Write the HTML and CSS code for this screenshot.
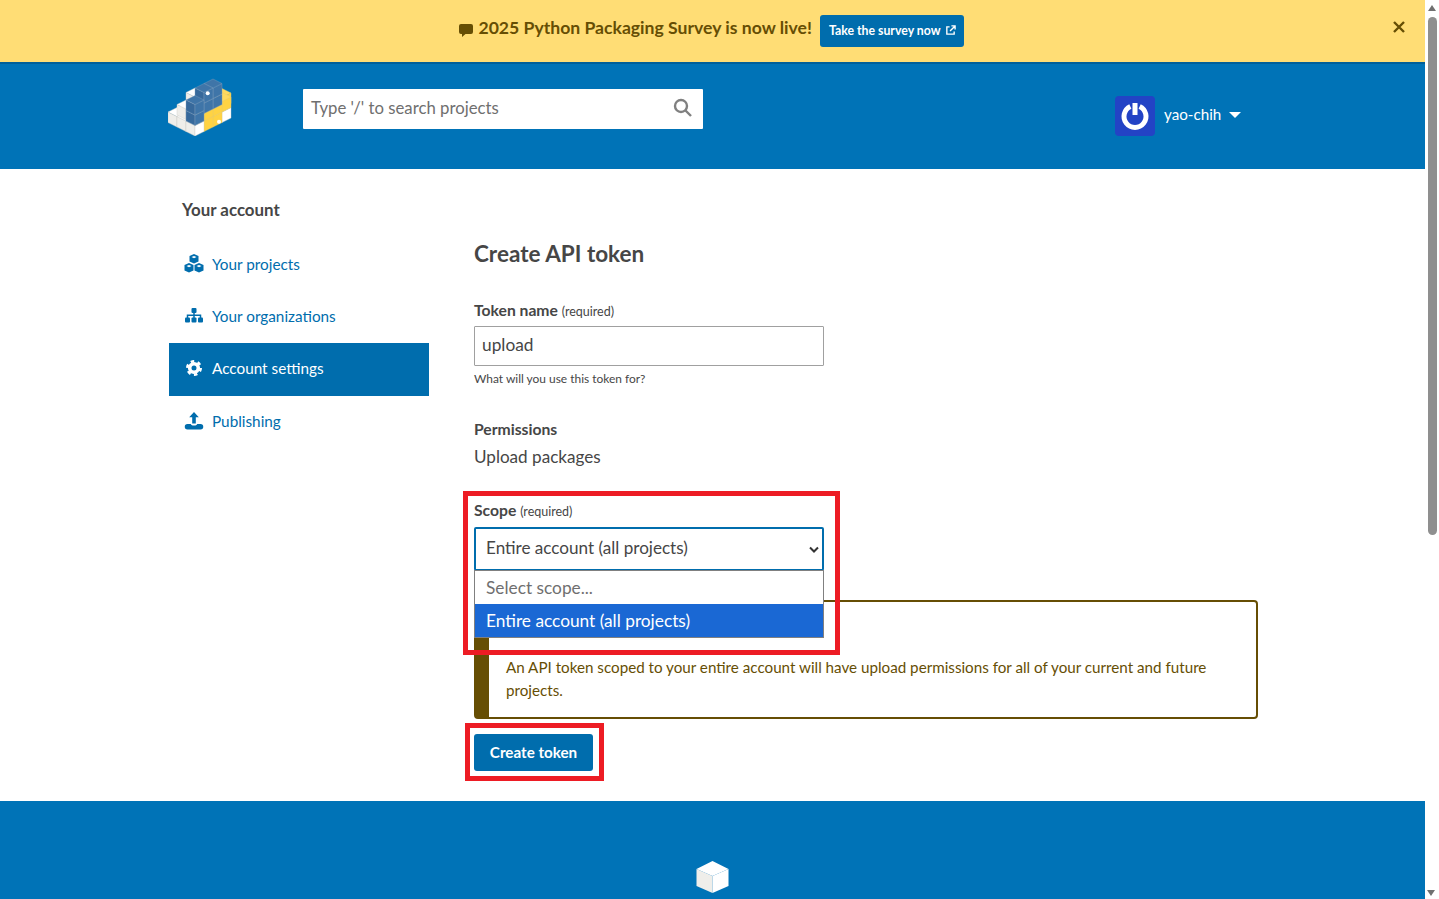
FILE: index.html
```html
<!DOCTYPE html>
<html lang="en">
<head>
<meta charset="utf-8">
<title>Create API token</title>
<link rel="stylesheet" href="styles.css">
</head>
<body>
<svg class="defs" width="0" height="0" aria-hidden="true">
  <symbol id="cube" viewBox="0 0 18 20" overflow="visible">
    <polygon class="face-l" points="0,4.5 9,9 9,19.5 0,15"/>
    <polygon class="face-r" points="9,9 18,4.5 18,15 9,19.5"/>
    <polygon class="face-t" points="9,0 18,4.5 9,9 0,4.5"/>
  </symbol>
</svg>
<div class="viewport">
  <div class="page">
    <div class="banner">
      <div class="banner-msg">
        <svg class="banner-icon" viewBox="0 0 14 14"><path d="M2 1h10a2 2 0 0 1 2 2v6a2 2 0 0 1-2 2H6.500L3 14v-3H2a2 2 0 0 1-2-2V3a2 2 0 0 1 2-2z"/></svg>
        <span class="banner-text">2025 Python Packaging Survey is now live!</span>
        <a class="banner-btn"><span class="btn-label">Take the survey now</span>
          <svg class="ext-icon" viewBox="0 0 12 12"><path d="M5 2H2v8h8V7M7 1h4v4M11 1 5.500 6.500"/></svg>
        </a>
      </div>
      <svg class="banner-close" viewBox="0 0 14 14"><path d="M2 2l10 10M12 2 2 12"/></svg>
    </div>
    <header class="site-header">
      <div class="container header-row">
        <svg class="logo" viewBox="0 -2 64 59">
          <use href="#cube" class="c-w" x="18" y="9" width="18" height="20"/>
          <use href="#cube" class="c-w" x="9" y="24" width="18" height="20"/>
          <use href="#cube" class="c-w" x="0" y="28.500" width="18" height="20"/>
          <use href="#cube" class="c-w" x="9" y="33" width="18" height="20"/>
          <use href="#cube" class="c-w" x="9" y="21" width="18" height="20"/>
          <use href="#cube" class="c-y" x="45" y="9.500" width="18" height="20"/>
          <use href="#cube" class="c-w" x="45" y="24" width="18" height="20"/>
          <use href="#cube" class="c-y" x="45" y="13.500" width="18" height="20"/>
          <use href="#cube" class="c-y" x="36" y="28.500" width="18" height="20"/>
          <use href="#cube" class="c-y" x="36" y="18" width="18" height="20"/>
          <use href="#cube" class="c-y" x="27" y="33" width="18" height="20"/>
          <use href="#cube" class="c-y" x="27" y="22.500" width="18" height="20"/>
          <use href="#cube" class="c-b" x="36" y="10.500" width="18" height="20"/>
          <use href="#cube" class="c-b" x="36" y="0" width="18" height="20"/>
          <use href="#cube" class="c-b" x="27" y="15" width="18" height="20"/>
          <use href="#cube" class="c-b" x="27" y="4.500" width="18" height="20"/>
          <use href="#cube" class="c-w" x="18" y="37.500" width="18" height="20"/>
          <use href="#cube" class="c-b" x="18" y="27" width="18" height="20"/>
          <use href="#cube" class="c-b" x="18" y="16.500" width="18" height="20"/>
          <circle class="eye" cx="39.700" cy="14.300" r="2"/>
          <circle class="eye" cx="51" cy="42.700" r="2"/>
        </svg>
        <div class="search">
          <span class="search-text">Type '/' to search projects</span>
          <svg class="search-icon" viewBox="0 0 20 20"><circle cx="8" cy="8" r="6"/><path d="M12.500 12.500 18 18"/></svg>
        </div>
        <div class="user">
          <svg class="avatar" viewBox="0 0 40 40"><rect width="40" height="40" rx="4"/><path d="M15.350 10.500a11 11 0 1 0 9.300 0M20 7v12"/></svg>
          <span class="user-name">yao-chih</span>
          <span class="caret"></span>
        </div>
      </div>
    </header>
    <div class="container content">
      <nav class="sidebar">
        <h3 class="side-title">Your account</h3>
        <a class="side-link">
          <svg class="side-icon" viewBox="0 0 20 20"><path d="M10 0l4.500 2v5.500L10 9.500l-4.500-2V2zM5 9l4.500 2v5.500L5 18.500l-4.500-2V11zM15 9l4.500 2v5.500L15 18.500l-4.500-2V11z"/><path class="notch" d="M10 2l2.500 1.100L10 4.200 7.500 3.100zM5 11l2.500 1.100L5 13.200l-2.500-1.100zM15 11l2.500 1.100-2.500 1.100-2.500-1.100z"/></svg>
          Your projects
        </a>
        <a class="side-link">
          <svg class="side-icon" viewBox="0 0 20 20"><rect x="7.500" y="2" width="5" height="5" rx="1"/><rect x="1" y="11.500" width="5" height="5" rx="1"/><rect x="7.500" y="11.500" width="5" height="5" rx="1"/><rect x="14" y="11.500" width="5" height="5" rx="1"/><path class="line" d="M10 7v5M3.500 12V9.300h13V12"/></svg>
          Your organizations
        </a>
        <a class="side-link active">
          <svg class="side-icon" viewBox="0 0 20 20"><circle class="gear-teeth" cx="10" cy="10" r="6.700"/><circle class="gear-ring" cx="10" cy="10" r="4.300"/></svg>
          Account settings
        </a>
        <a class="side-link">
          <svg class="side-icon" viewBox="0 0 20 20"><path d="M10 1l4.800 5.300h-3v6.200H8.200V6.300h-3zM3.500 13h3.300c.5 1 1.500 1.500 3.200 1.500s2.700-.5 3.200-1.500h3.300a2 2 0 0 1 0 5.500h-13a2 2 0 0 1 0-5.500z"/></svg>
          Publishing
        </a>
      </nav>
      <main class="main">
        <h2 class="title">Create API token</h2>
        <div class="field field-name">
          <label class="label">Token name <small class="req">(required)</small></label>
          <div class="input">upload</div>
          <p class="help">What will you use this token for?</p>
        </div>
        <div class="field field-perm">
          <label class="label">Permissions</label>
          <p class="perm-text">Upload packages</p>
        </div>
        <div class="field field-scope">
          <label class="label">Scope <small class="req">(required)</small></label>
          <div class="select">
            <span>Entire account (all projects)</span>
            <svg class="chev" viewBox="0 0 10 7"><path d="M1 1.500 5 5.500 9 1.500"/></svg>
          </div>
          <div class="popup">
            <div class="option muted">Select scope...</div>
            <div class="option selected">Entire account (all projects)</div>
          </div>
          <div class="mark mark-scope"></div>
        </div>
        <div class="warning">
          <p>An API token scoped to your entire account will have upload permissions for all of your current and future projects.</p>
        </div>
        <div class="actions">
          <button class="btn">Create token</button>
          <div class="mark mark-btn"></div>
        </div>
      </main>
    </div>
    <footer class="footer">
      <svg class="foot-logo" viewBox="0 0 33 32">
        <polygon class="fl-l" points="0.500,8 16.500,15 16.500,32 0.500,25"/>
        <polygon class="fl-r" points="16.500,15 32.500,8 32.500,25 16.500,32"/>
        <polygon class="fl-t" points="16.500,0 32.500,8 16.500,15 0.500,8"/>
      </svg>
    </footer>
  </div>
  <div class="scrollbar">
    <span class="arrow up"></span>
    <span class="thumb"></span>
    <span class="arrow down"></span>
  </div>
</div>
</body>
</html>
```

FILE: styles.css
```css
* { box-sizing: border-box; }
html, body { margin: 0; padding: 0; height: 899px; overflow: hidden; }
body { font-family: "Lato", "Liberation Sans", sans-serif; font-size: 16px; color: #464646; background: #fff; }
.defs { position: absolute; }
.viewport { display: flex; height: 899px; overflow: hidden; }
.page { width: 1425px; flex: none; }

.banner { height: 64px; background: #ffdd75; border-bottom: 2px solid #005f99; display: flex; align-items: center; justify-content: center; position: relative; color: #664e04; }
.banner-msg { display: flex; align-items: center; margin-right: 2px; }
.banner-icon { width: 14px; height: 14px; fill: #664e04; margin-right: 5px; margin-bottom: 3px; }
.banner-text { font-size: 17.600px; font-weight: 700; margin-right: 8px; margin-bottom: 8px; }
.banner-btn { display: flex; align-items: center; gap: 4px; height: 32px; padding: 0 8px 0 9px; background: #006dad; color: #fff; border-radius: 3px; font-size: 12.300px; font-weight: 700; }
.btn-label { margin-bottom: 2px; }
.ext-icon { width: 11px; height: 11px; fill: none; stroke: #fff; stroke-width: 1.500; margin-bottom: 2px; }
.banner-close { position: absolute; left: 1392px; top: 20px; width: 14px; height: 14px; fill: none; stroke: #664e04; stroke-width: 2.400; }

.site-header { height: 105px; background: #0073b7; }
.container { width: 1090px; margin-left: 168px; }
.header-row { display: flex; align-items: flex-start; padding-top: 13px; }
.logo { width: 64px; height: 59px; flex: none; }
.face-t { fill: var(--t); stroke: var(--s); stroke-width: .4; }
.face-l { fill: var(--l); stroke: var(--s); stroke-width: .4; }
.face-r { fill: var(--r); stroke: var(--s); stroke-width: .4; }
.c-w { --t: #fff; --l: #efeeea; --r: #fff; --s: #c9c9c4; }
.c-y { --t: #ffd95e; --l: #ffd242; --r: #ffd343; --s: #e7c96c; }
.c-b { --t: #3f75a8; --l: #37699b; --r: #3f75a8; --s: #7f9fbd; }
.eye { fill: #fff; }
.search { width: 400px; height: 40px; margin: 12px 0 0 71px; background: #fff; display: flex; align-items: center; justify-content: space-between; padding: 0 10px 0 8px; border-radius: 1px; }
.search-text { font-size: 16.750px; color: #6f6f6f; margin-bottom: 3px; }
.search-icon { width: 20px; height: 20px; fill: none; stroke: #808080; stroke-width: 2.400; margin-bottom: 2px; }
.user { display: flex; align-items: center; margin: 19px 0 0 412px; color: #fff; }
.avatar { width: 40px; height: 40px; fill: #2343c5; stroke: none; }
.avatar path { fill: none; stroke: #fff; stroke-width: 5; }
.user-name { margin-left: 9px; margin-bottom: 5px; font-size: 15.200px; }
.caret { margin-left: 8px; margin-bottom: 2px; width: 0; height: 0; border-left: 6px solid transparent; border-right: 6px solid transparent; border-top: 6px solid #fff; }

.content { display: flex; height: 632px; padding-left: 1px; }
.sidebar { width: 260px; flex: none; }
.side-title { margin: 0; padding: 31px 0 0 13px; height: 69px; font-size: 16.900px; font-weight: 700; line-height: 20px; color: #464646; }
.side-link { display: flex; align-items: center; height: 52.500px; padding: 0 0 1px 15px; gap: 8px; color: #006dad; font-size: 15.300px; }
.side-link.active { background: #006dad; color: #fff; padding-bottom: 3px; }
.side-icon { width: 20px; height: 20px; flex: none; fill: #006dad; }
.side-link.active .side-icon { fill: #fff; }
.notch { fill: #fff; }
.line { fill: none; stroke: #006dad; stroke-width: 1.500; }
.gear-teeth { fill: none; stroke: #fff; stroke-width: 2.600; stroke-dasharray: 3.500 3.520; }
.gear-ring { fill: none; stroke: #fff; stroke-width: 3.600; }

.main { margin-left: 45px; width: 784px; flex: none; padding-top: 71px; }
.title { margin: 0; font-size: 22.500px; font-weight: 700; line-height: 28px; color: #464646; }
.field { position: relative; }
.field-name { margin-top: 32px; }
.label { display: block; font-size: 15.700px; font-weight: 700; line-height: 20px; color: #464646; }
.req { font-size: 12.500px; font-weight: 400; }
.input { margin-top: 4px; width: 350px; height: 40px; border: 1px solid #a0a0a0; border-radius: 1px; padding: 0 7px 3px; display: flex; align-items: center; font-size: 17.300px; }
.help { margin: 5px 0 0; font-size: 11.950px; line-height: 16px; }
.field-perm { margin-top: 32px; }
.perm-text { margin: 6px 0 0; font-size: 17.100px; line-height: 24px; }
.field-scope { margin-top: 31px; }
.select { margin-top: 5px; width: 350px; height: 44px; border: 2px solid #006dad; border-radius: 2px; display: flex; align-items: center; justify-content: space-between; padding: 0 3px 3px 10px; font-size: 17.100px; }
.chev { width: 10px; height: 7px; fill: none; stroke: #333; stroke-width: 2; margin-top: 3px; }
.popup { position: absolute; left: 0; top: 70px; width: 350px; height: 68px; background: #fff; border: 1px solid #808080; z-index: 2; }
.option { height: 33px; padding-left: 11px; display: flex; align-items: center; font-size: 17.300px; }
.muted { color: #6f6f6f; }
.selected { background: #1a68d4; color: #fff; }
.mark { position: absolute; border: 5px solid #ed1c24; z-index: 3; }
.mark-scope { left: -11px; top: -9px; width: 377px; height: 164px; }
.warning { margin-top: 29px; width: 784px; height: 119px; border: 2px solid #664e04; border-left: 15px solid #664e04; border-radius: 4px; padding: 54px 40px 0 17px; color: #664e04; }
.warning p { margin: 0; font-size: 15.200px; line-height: 23px; }
.actions { position: relative; margin-top: 15px; }
.btn { display: block; width: 119px; height: 37px; background: #006dad; border: 0; border-radius: 3px; color: #fff; font-family: inherit; font-size: 15.200px; font-weight: 700; padding: 0 0 2px; }
.mark-btn { left: -9px; top: -11px; width: 139px; height: 58px; }

.footer { height: 98px; background: #0073b7; display: flex; justify-content: center; padding-top: 60px; overflow: hidden; }
.foot-logo { width: 33px; height: 32px; flex: none; }
.fl-l { fill: #efeeea; }
.fl-r { fill: #fff; }
.fl-t { fill: #fff; }

.scrollbar { width: 14px; flex: none; background: #fff; display: flex; flex-direction: column; align-items: center; padding-top: 5px; position: relative; }
.thumb { width: 9px; height: 518px; margin-top: 6px; background: #8f8f8f; border-radius: 5px; }
.arrow { width: 0; height: 0; border-left: 4.500px solid transparent; border-right: 4.500px solid transparent; }
.up { border-bottom: 6px solid #707070; }
.down { border-top: 6px solid #707070; position: absolute; bottom: 3px; left: 2px; }
```
